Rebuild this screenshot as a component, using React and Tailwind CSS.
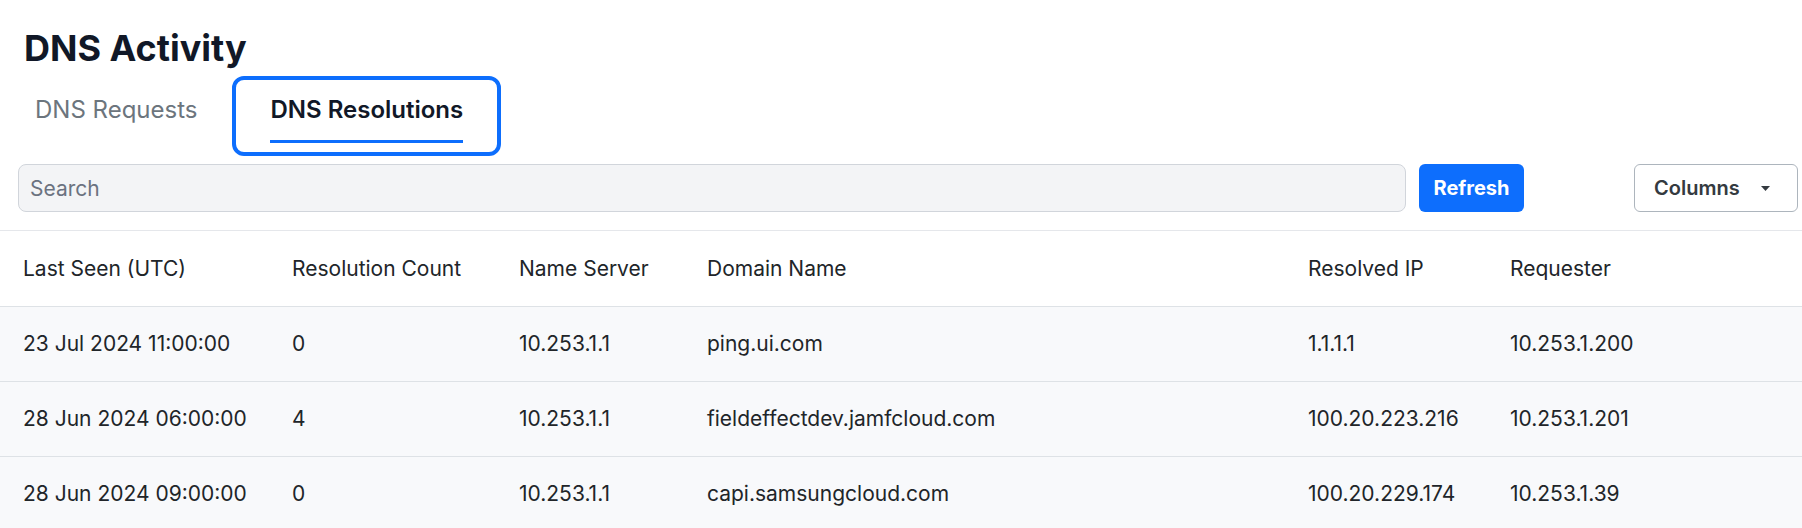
import { useState } from "react";

const columns = [
  { key: "lastSeen", label: "Last Seen (UTC)", width: "w-[269px]" },
  { key: "count", label: "Resolution Count", width: "w-[227px]" },
  { key: "server", label: "Name Server", width: "w-[188px]" },
  { key: "domain", label: "Domain Name", width: "w-[601px]" },
  { key: "ip", label: "Resolved IP", width: "w-[202px]" },
  { key: "requester", label: "Requester", width: "" },
];

const rows = [
  {
    lastSeen: "23 Jul 2024 11:00:00",
    count: 0,
    server: "10.253.1.1",
    domain: "ping.ui.com",
    ip: "1.1.1.1",
    requester: "10.253.1.200",
  },
  {
    lastSeen: "28 Jun 2024 06:00:00",
    count: 4,
    server: "10.253.1.1",
    domain: "fieldeffectdev.jamfcloud.com",
    ip: "100.20.223.216",
    requester: "10.253.1.201",
  },
  {
    lastSeen: "28 Jun 2024 09:00:00",
    count: 0,
    server: "10.253.1.1",
    domain: "capi.samsungcloud.com",
    ip: "100.20.229.174",
    requester: "10.253.1.39",
  },
];

function Tab({ active, children, onClick }) {
  return (
    <button
      type="button"
      onClick={onClick}
      className={
        active
          ? "flex flex-col items-start rounded-xl border-4 border-[#0d6efd] px-[34px] pt-[14px] pb-[9px] text-2xl font-semibold text-[#111827]"
          : "flex flex-col items-start border-4 border-transparent px-[31px] pt-[14px] pb-[9px] text-2xl text-[#6c757d]"
      }
    >
      <span className="leading-8">{children}</span>
      <span
        className={
          active ? "mt-[14px] h-[3px] w-full bg-[#0d6efd]" : "mt-[14px] h-[3px] w-full"
        }
      />
    </button>
  );
}

export default function App() {
  const [tab, setTab] = useState("resolutions");
  const [query, setQuery] = useState("");

  const visible = rows.filter((r) =>
    Object.values(r).join(" ").toLowerCase().includes(query.toLowerCase())
  );

  return (
    <div className="min-h-screen bg-white font-['Inter',sans-serif] text-[#212529]">
      <h1 className="px-6 pt-7 text-4xl leading-10 font-bold text-[#111827]">
        DNS Activity
      </h1>

      <div className="mt-2 flex">
        <Tab active={tab === "requests"} onClick={() => setTab("requests")}>
          DNS Requests
        </Tab>
        <Tab active={tab === "resolutions"} onClick={() => setTab("resolutions")}>
          DNS Resolutions
        </Tab>
      </div>

      <div className="flex items-center border-b border-[#e5e7eb] pt-2 pr-1 pb-[18px] pl-[18px]">
        <input
          value={query}
          onChange={(e) => setQuery(e.target.value)}
          placeholder="Search"
          className="h-12 flex-1 rounded-lg border border-[#d1d5db] bg-[#f3f4f6] pl-[11px] text-[21px] text-[#212529] outline-none placeholder:text-[#6b7280]"
        />
        <button
          type="button"
          className="ml-[13px] flex h-12 w-[105px] items-center justify-center rounded-md bg-[#0d6efd] text-xl font-bold text-white"
        >
          Refresh
        </button>
        <button
          type="button"
          className="ml-[110px] flex h-12 w-[164px] items-center rounded-md border border-[#adb5bd] pl-[19px] text-xl font-semibold text-[#343a40]"
        >
          Columns
          <svg className="ml-[21px]" width="9" height="5" viewBox="0 0 9 5">
            <path d="M0 0h9L4.5 5z" fill="#343a40" />
          </svg>
        </button>
      </div>

      <table className="w-full table-fixed border-collapse text-left text-[21px]">
        <colgroup>
          {columns.map((c) => (
            <col key={c.key} className={c.width} />
          ))}
        </colgroup>
        <thead>
          <tr className="border-b border-[#dee2e6]">
            {columns.map((c) => (
              <th key={c.key} className="h-[75px] px-[23px] font-normal whitespace-nowrap">
                {c.label}
              </th>
            ))}
          </tr>
        </thead>
        <tbody>
          {visible.map((r) => (
            <tr key={r.lastSeen} className="border-b border-[#dee2e6] bg-[#f8f9fb]">
              {columns.map((c) => (
                <td key={c.key} className="h-[75px] px-[23px] whitespace-nowrap">
                  {r[c.key]}
                </td>
              ))}
            </tr>
          ))}
        </tbody>
      </table>
    </div>
  );
}
